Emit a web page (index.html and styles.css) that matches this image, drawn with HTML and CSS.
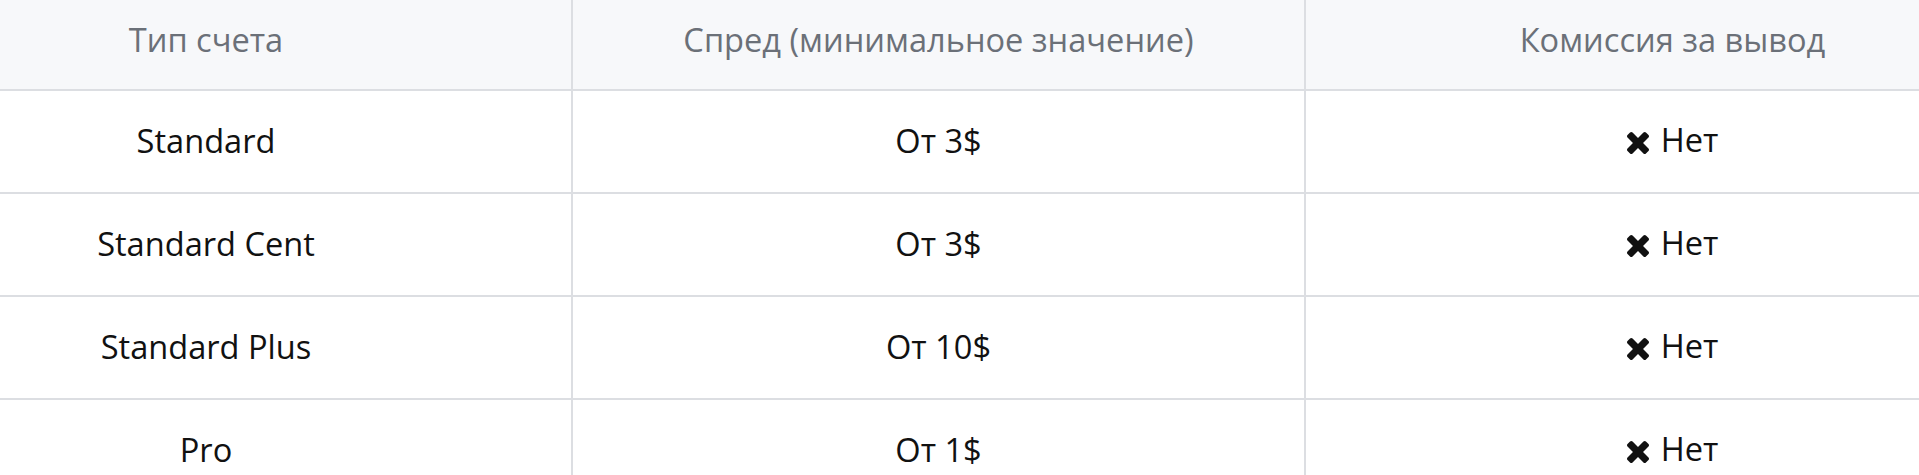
FILE: index.html
```html
<!DOCTYPE html>
<html lang="ru">
<head>
<meta charset="utf-8">
<title>Типы счетов</title>
<link rel="stylesheet" href="styles.css">
</head>
<body>
<div class="scroller">
  <table class="accounts">
    <colgroup>
      <col class="c1">
      <col class="c2">
      <col class="c3">
    </colgroup>
    <thead>
      <tr>
        <th>Тип счета</th>
        <th>Спред (минимальное значение)</th>
        <th>Комиссия за вывод</th>
      </tr>
    </thead>
    <tbody>
      <tr>
        <td>Standard</td>
        <td>От 3$</td>
        <td><span class="no"><svg class="x" viewBox="110 366 1188 1188" aria-hidden="true"><path d="M1298 1322q0 40-28 68l-136 136q-28 28-68 28t-68-28l-294-294-294 294q-28 28-68 28t-68-28l-136-136q-28-28-28-68t28-68l294-294-294-294q-28-28-28-68t28-68l136-136q28-28 68-28t68 28l294 294 294-294q28-28 68-28t68 28l136 136q28 28 28 68t-28 68l-294 294 294 294q28 28 28 68z"/></svg>Нет</span></td>
      </tr>
      <tr>
        <td>Standard Cent</td>
        <td>От 3$</td>
        <td><span class="no"><svg class="x" viewBox="110 366 1188 1188" aria-hidden="true"><path d="M1298 1322q0 40-28 68l-136 136q-28 28-68 28t-68-28l-294-294-294 294q-28 28-68 28t-68-28l-136-136q-28-28-28-68t28-68l294-294-294-294q-28-28-28-68t28-68l136-136q28-28 68-28t68 28l294 294 294-294q28-28 68-28t68 28l136 136q28 28 28 68t-28 68l-294 294 294 294q28 28 28 68z"/></svg>Нет</span></td>
      </tr>
      <tr>
        <td>Standard Plus</td>
        <td>От 10$</td>
        <td><span class="no"><svg class="x" viewBox="110 366 1188 1188" aria-hidden="true"><path d="M1298 1322q0 40-28 68l-136 136q-28 28-68 28t-68-28l-294-294-294 294q-28 28-68 28t-68-28l-136-136q-28-28-28-68t28-68l294-294-294-294q-28-28-28-68t28-68l136-136q28-28 68-28t68 28l294 294 294-294q28-28 68-28t68 28l136 136q28 28 28 68t-28 68l-294 294 294 294q28 28 28 68z"/></svg>Нет</span></td>
      </tr>
      <tr>
        <td>Pro</td>
        <td>От 1$</td>
        <td><span class="no"><svg class="x" viewBox="110 366 1188 1188" aria-hidden="true"><path d="M1298 1322q0 40-28 68l-136 136q-28 28-68 28t-68-28l-294-294-294 294q-28 28-68 28t-68-28l-136-136q-28-28-28-68t28-68l294-294-294-294q-28-28-28-68t28-68l136-136q28-28 68-28t68 28l294 294 294-294q28-28 68-28t68 28l136 136q28 28 28 68t-28 68l-294 294 294 294q28 28 28 68z"/></svg>Нет</span></td>
      </tr>
    </tbody>
  </table>
</div>
</body>
</html>
```

FILE: styles.css
```css
html, body {
  margin: 0;
  padding: 0;
  background: #ffffff;
  overflow: hidden;
}

body {
  font-family: "Open Sans", "Liberation Sans", sans-serif;
  font-size: 32.6px;
  color: #111111;
}

.scroller {
  width: 100%;
  overflow: hidden;
}

.accounts {
  margin-left: -159px;
  width: 2200px;
  table-layout: fixed;
  border-collapse: separate;
  border-spacing: 0;
}

.c1 { width: 732px; }
.c2 { width: 733px; }
.c3 { width: 735px; }

.accounts th,
.accounts td {
  padding: 0;
  text-align: center;
  vertical-align: middle;
  line-height: 1.5;
  border-right: 2px solid #dcdee2;
  border-bottom: 2px solid #dcdee2;
}

.accounts th {
  height: 80px;
  padding-bottom: 9px;
  background: #f7f8fa;
  color: #6b7078;
  font-weight: 400;
}

.accounts td {
  height: 101px;
  color: #111111;
}

.no {
  display: inline-flex;
  align-items: center;
  gap: 12px;
}

.x {
  width: 22px;
  height: 22px;
  fill: #111111;
  margin-top: 4px;
}
```
